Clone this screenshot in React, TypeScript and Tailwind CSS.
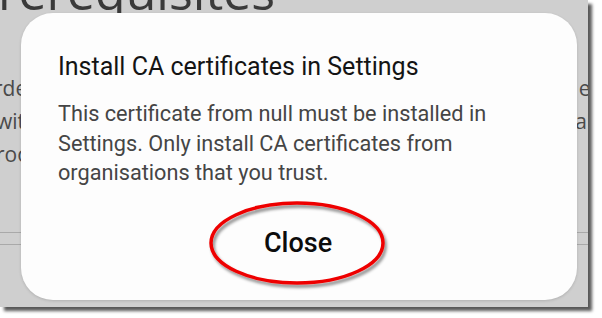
export default function App() {
  return (
    <div className="h-[318px] w-[602px] overflow-hidden bg-white">
      <div className="relative h-[307px] w-[588px] overflow-hidden bg-[#cfcfcf] shadow-[4px_4px_3px_rgba(0,0,0,0.65)]">
        {/* page behind the dialog */}
        <div className="flex flex-col font-['Open_Sans',sans-serif] text-[#4a4a4a]">
          <div className="-mt-[40px] -ml-[32px] whitespace-nowrap text-[50px] leading-[62px] text-[#3a3a3a]">
            Prerequisites
          </div>
          <div className="mt-[54px] flex flex-col gap-[9px] text-[21px] leading-[24px]">
            <div className="flex justify-between whitespace-nowrap">
              <span className="-ml-[6px]">rder to use the proxy on your Android</span>
              <span className="-mr-[13px]">ev</span>
            </div>
            <div className="flex justify-between whitespace-nowrap">
              <span className="-ml-[4px]">with the certificate authority installed</span>
              <span className="-mr-[17px]">ald</span>
            </div>
            <div className="flex justify-between whitespace-nowrap">
              <span className="-ml-[4px]">root</span>
            </div>
          </div>
          <div className="mt-[66px] h-px bg-[#a9a9a9]" />
          <div className="mt-[11px] h-px bg-[#a9a9a9]" />
        </div>

        {/* dialog */}
        <div className="absolute left-[21px] top-[13px] flex h-[287px] w-[556px] flex-col rounded-[32px] bg-[#fdfdfd] px-[37px] pt-[39px] font-['Roboto',sans-serif] shadow-[0_1px_3px_rgba(0,0,0,0.15)]">
          <div className="whitespace-nowrap text-[25px] leading-[30px] text-[#141414]">
            Install CA certificates in Settings
          </div>
          <div className="mt-[17px] text-[21.7px] leading-[29.5px] text-[#454545]">
            This certificate from null must be installed in
            <br />
            Settings. Only install CA certificates from
            <br />
            organisations that you trust.
          </div>
          <div className="mt-[39px] flex justify-center pr-[2px]">
            <span className="text-[27px] font-medium leading-[32px] text-[#0c0c0c]">Close</span>
          </div>
        </div>

        {/* red annotation ellipse */}
        <svg className="absolute left-[200px] top-[192px]" width="200" height="104" viewBox="0 0 200 104">
          <defs>
            <filter id="sh" x="-20%" y="-20%" width="140%" height="140%">
              <feDropShadow dx="2" dy="3" stdDeviation="1.6" floodColor="#000" floodOpacity="0.45" />
            </filter>
          </defs>
          <ellipse cx="97" cy="51" rx="86" ry="40" fill="none" stroke="#ee0000" strokeWidth="3.5" filter="url(#sh)" />
        </svg>
      </div>
    </div>
  );
}
